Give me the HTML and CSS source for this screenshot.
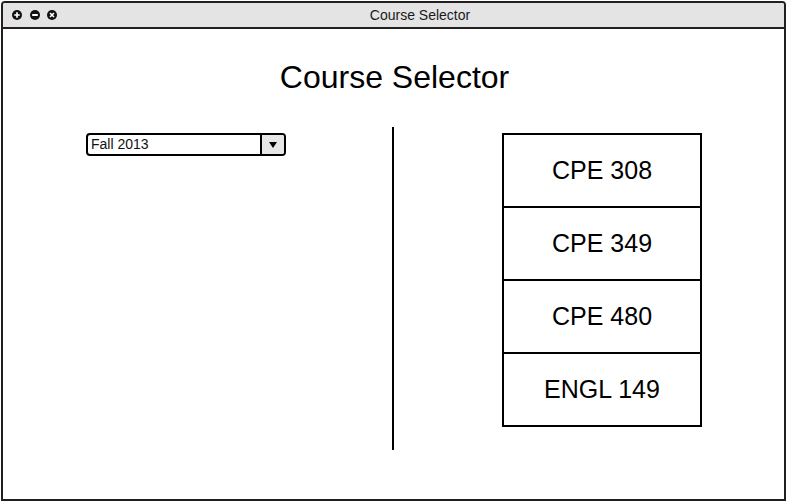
FILE: index.html
```html
<!DOCTYPE html>
<html>
<head>
<meta charset="utf-8">
<title>Course Selector</title>
<link rel="stylesheet" href="styles.css">
</head>
<body>
<div class="window">
  <div class="titlebar">
    <div class="controls">
      <svg class="ctl" viewBox="0 0 10 10"><circle cx="5" cy="5" r="5" fill="#111"/><path d="M5 2.2v5.6M2.2 5h5.6" stroke="#fff" stroke-width="1.7"/></svg>
      <svg class="ctl" viewBox="0 0 10 10"><circle cx="5" cy="5" r="5" fill="#111"/><path d="M2.2 5h5.6" stroke="#fff" stroke-width="1.9"/></svg>
      <svg class="ctl" viewBox="0 0 10 10"><circle cx="5" cy="5" r="5" fill="#111"/><path d="M3 3l4 4M7 3l-4 4" stroke="#fff" stroke-width="1.6"/></svg>
    </div>
    <div class="wintitle">Course Selector</div>
  </div>
  <div class="content">
    <h1 class="heading">Course Selector</h1>
    <div class="panels">
      <div class="left">
        <div class="select">
          <span class="select-value">Fall 2013</span>
          <span class="select-btn"><svg viewBox="0 0 8 6" class="arrow"><path d="M0 0h8L4 6z" fill="#000"/></svg></span>
        </div>
      </div>
      <div class="divider"></div>
      <div class="right">
        <div class="courses">
          <div class="course">CPE 308</div>
          <div class="course">CPE 349</div>
          <div class="course">CPE 480</div>
          <div class="course">ENGL 149</div>
        </div>
      </div>
    </div>
  </div>
</div>
</body>
</html>
```

FILE: styles.css
```css
html, body {
  margin: 0;
  padding: 0;
  background: #fff;
}
body {
  font-family: "Liberation Sans", Arial, sans-serif;
  color: #000;
}
.window {
  margin: 1px 0 0 1px;
  width: 785px;
  height: 500px;
  box-sizing: border-box;
  border: 2px solid #231f20;
  border-radius: 4px 4px 0 0;
  display: flex;
  flex-direction: column;
  overflow: hidden;
}
.titlebar {
  height: 24px;
  flex: none;
  background: #e4e4e4;
  border-bottom: 2px solid #231f20;
  display: flex;
  align-items: center;
}
.controls {
  display: flex;
  gap: 7.5px;
  padding-left: 9px;
  width: 50px;
}
.ctl {
  width: 10px;
  height: 10px;
  display: block;
  margin-top: -1px;
}
.wintitle {
  flex: 1;
  text-align: center;
  font-size: 14px;
  color: #1a1a1a;
  padding-right: 6px;
  margin-top: -1px;
}
.content {
  flex: 1;
  display: flex;
  flex-direction: column;
}
.heading {
  margin: 30px 0 0;
  font-size: 32px;
  font-weight: normal;
  line-height: 36px;
  text-align: center;
  padding-left: 2px;
}
.panels {
  margin-top: 32px;
  display: flex;
}
.left {
  width: 306px;
  padding-left: 83px;
  padding-top: 6px;
}
.select {
  width: 200px;
  height: 23px;
  box-sizing: border-box;
  border: 2px solid #000;
  border-radius: 4px;
  display: flex;
  overflow: hidden;
}
.select-value {
  flex: 1;
  font-size: 14px;
  line-height: 19px;
  padding-left: 3px;
  color: #111;
}
.select-btn {
  width: 22px;
  border-left: 2px solid #000;
  background: #e6e6e6;
  display: flex;
  align-items: center;
  justify-content: center;
}
.arrow {
  width: 8px;
  height: 6px;
  display: block;
}
.divider {
  width: 2px;
  height: 323px;
  background: #000;
}
.right {
  padding-left: 108px;
  padding-top: 6px;
}
.courses {
  width: 200px;
  box-sizing: border-box;
  border: 2px solid #000;
  display: flex;
  flex-direction: column;
}
.course {
  height: 71px;
  display: flex;
  align-items: center;
  justify-content: center;
  font-size: 25px;
  border-top: 2px solid #000;
}
.course:first-child {
  border-top: none;
}
```
